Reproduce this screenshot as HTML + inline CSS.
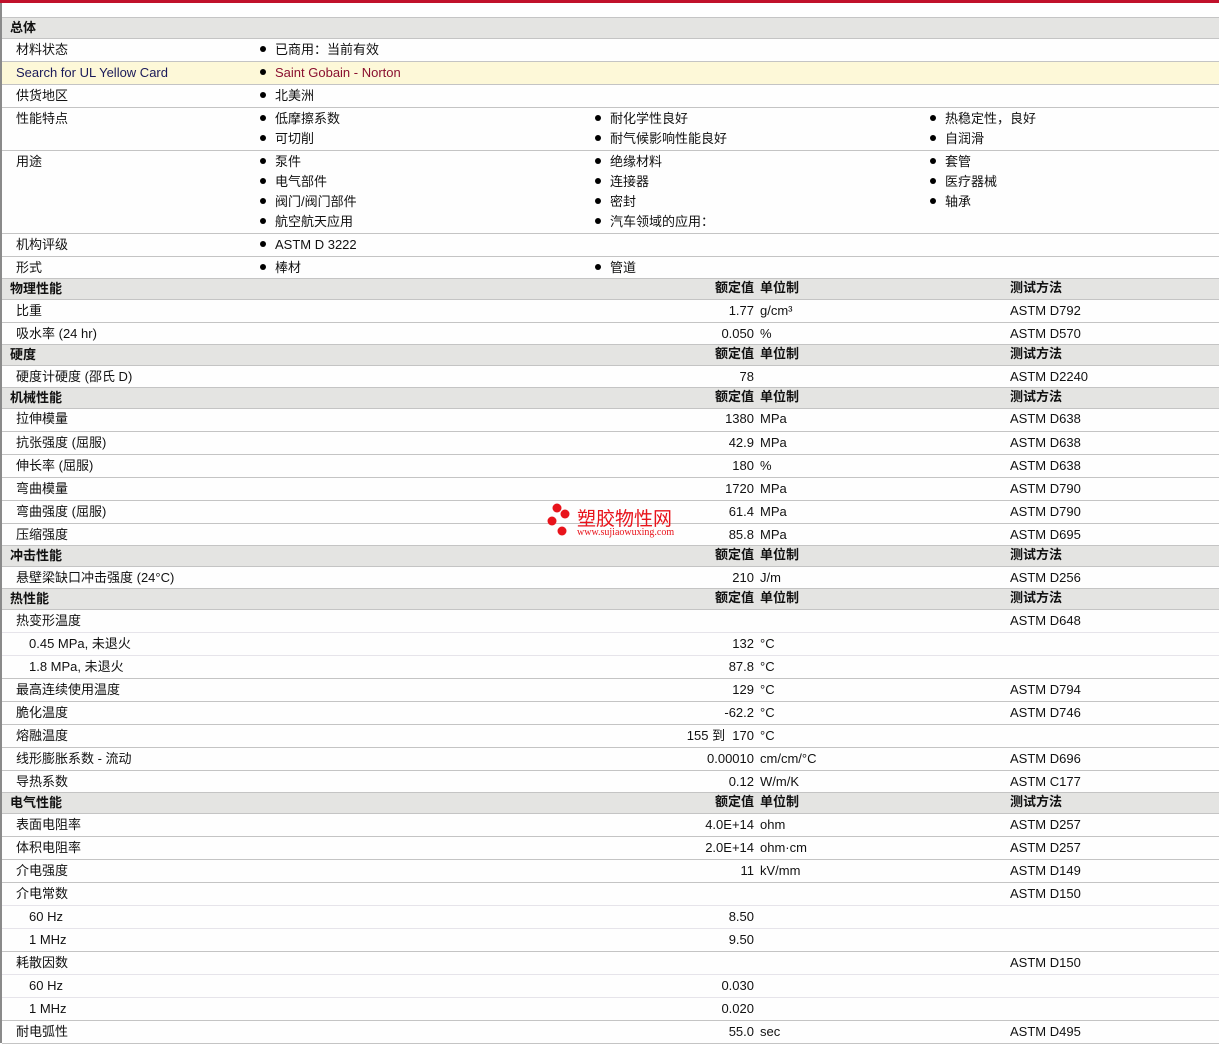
<!DOCTYPE html>
<html><head><meta charset="utf-8"><style>
body{margin:0;width:1219px;height:1043px;position:relative;overflow:hidden;background:#fefefe;font-family:"Liberation Sans","Noto Sans CJK SC",sans-serif;font-size:13px;color:#111}
.bar{position:absolute;left:0;top:0;width:1219px;height:3px;background:#c0102a}
.lb{position:absolute;left:0;top:3px;width:2px;height:1040px;background:#8a8a8a}
.r{position:absolute;left:2px;right:0;border-top:1px solid #c4c4c4}
.s{border-top-color:#e6e4ea}
.h{background:#e4e4e2}
.t{position:absolute;line-height:16px;white-space:nowrap;margin-top:1px}
.bo{font-weight:bold}
.v{position:absolute;right:465px;line-height:16px;white-space:nowrap;text-align:right;margin-top:1px}
.b{position:absolute;width:6px;height:6px;border-radius:50%;background:#000}
</style></head><body>
<div class="bar"></div>
<div class="r h" style="top:17px;height:21px"></div>
<div class="r" style="top:38px;height:22px"></div>
<div class="r" style="top:61px;height:22px;background:#fdf8d8"></div>
<div class="r" style="top:84px;height:22px"></div>
<div class="r" style="top:107px;height:42px"></div>
<div class="r" style="top:150px;height:82px"></div>
<div class="r" style="top:233px;height:22px"></div>
<div class="r" style="top:256px;height:21px"></div>
<div class="r h" style="top:278px;height:20px"></div>
<div class="r" style="top:299px;height:22px"></div>
<div class="r" style="top:322px;height:21px"></div>
<div class="r h" style="top:344px;height:20px"></div>
<div class="r" style="top:365px;height:21px"></div>
<div class="r h" style="top:387px;height:20px"></div>
<div class="r" style="top:408px;height:22px"></div>
<div class="r" style="top:431px;height:22px"></div>
<div class="r" style="top:454px;height:22px"></div>
<div class="r" style="top:477px;height:22px"></div>
<div class="r" style="top:500px;height:22px"></div>
<div class="r" style="top:523px;height:21px"></div>
<div class="r h" style="top:545px;height:20px"></div>
<div class="r" style="top:566px;height:21px"></div>
<div class="r h" style="top:588px;height:20px"></div>
<div class="r" style="top:609px;height:22px"></div>
<div class="r s" style="top:632px;height:22px"></div>
<div class="r s" style="top:655px;height:22px"></div>
<div class="r" style="top:678px;height:22px"></div>
<div class="r" style="top:701px;height:22px"></div>
<div class="r" style="top:724px;height:22px"></div>
<div class="r" style="top:747px;height:22px"></div>
<div class="r" style="top:770px;height:21px"></div>
<div class="r h" style="top:792px;height:20px"></div>
<div class="r" style="top:813px;height:22px"></div>
<div class="r" style="top:836px;height:22px"></div>
<div class="r" style="top:859px;height:22px"></div>
<div class="r" style="top:882px;height:22px"></div>
<div class="r s" style="top:905px;height:22px"></div>
<div class="r s" style="top:928px;height:22px"></div>
<div class="r" style="top:951px;height:22px"></div>
<div class="r s" style="top:974px;height:22px"></div>
<div class="r s" style="top:997px;height:22px"></div>
<div class="r" style="top:1020px;height:22px;border-bottom:1px solid #c4c4c4"></div>
<div class="lb"></div>

<span class="t bo" style="left:10px;top:19px">总体</span>
<span class="t" style="left:16px;top:41px">材料状态</span>
<span class="b" style="left:260px;top:46px"></span><span class="t" style="left:275px;top:41px">已商用：当前有效</span>
<span class="t" style="left:16px;top:64px;color:#1a1a5a">Search for UL Yellow Card</span>
<span class="b" style="left:260px;top:69px"></span><span class="t" style="left:275px;top:64px;color:#8a1030">Saint Gobain - Norton</span>
<span class="t" style="left:16px;top:87px">供货地区</span>
<span class="b" style="left:260px;top:92px"></span><span class="t" style="left:275px;top:87px">北美洲</span>
<span class="t" style="left:16px;top:110px">性能特点</span>
<span class="b" style="left:260px;top:115px"></span><span class="t" style="left:275px;top:110px">低摩擦系数</span>
<span class="b" style="left:260px;top:135px"></span><span class="t" style="left:275px;top:130px">可切削</span>
<span class="b" style="left:595px;top:115px"></span><span class="t" style="left:610px;top:110px">耐化学性良好</span>
<span class="b" style="left:595px;top:135px"></span><span class="t" style="left:610px;top:130px">耐气候影响性能良好</span>
<span class="b" style="left:930px;top:115px"></span><span class="t" style="left:945px;top:110px">热稳定性，良好</span>
<span class="b" style="left:930px;top:135px"></span><span class="t" style="left:945px;top:130px">自润滑</span>
<span class="t" style="left:16px;top:153px">用途</span>
<span class="b" style="left:260px;top:158px"></span><span class="t" style="left:275px;top:153px">泵件</span>
<span class="b" style="left:260px;top:178px"></span><span class="t" style="left:275px;top:173px">电气部件</span>
<span class="b" style="left:260px;top:198px"></span><span class="t" style="left:275px;top:193px">阀门/阀门部件</span>
<span class="b" style="left:260px;top:218px"></span><span class="t" style="left:275px;top:213px">航空航天应用</span>
<span class="b" style="left:595px;top:158px"></span><span class="t" style="left:610px;top:153px">绝缘材料</span>
<span class="b" style="left:595px;top:178px"></span><span class="t" style="left:610px;top:173px">连接器</span>
<span class="b" style="left:595px;top:198px"></span><span class="t" style="left:610px;top:193px">密封</span>
<span class="b" style="left:595px;top:218px"></span><span class="t" style="left:610px;top:213px">汽车领域的应用：</span>
<span class="b" style="left:930px;top:158px"></span><span class="t" style="left:945px;top:153px">套管</span>
<span class="b" style="left:930px;top:178px"></span><span class="t" style="left:945px;top:173px">医疗器械</span>
<span class="b" style="left:930px;top:198px"></span><span class="t" style="left:945px;top:193px">轴承</span>
<span class="t" style="left:16px;top:236px">机构评级</span>
<span class="b" style="left:260px;top:241px"></span><span class="t" style="left:275px;top:236px">ASTM D 3222</span>
<span class="t" style="left:16px;top:259px">形式</span>
<span class="b" style="left:260px;top:264px"></span><span class="t" style="left:275px;top:259px">棒材</span>
<span class="b" style="left:595px;top:264px"></span><span class="t" style="left:610px;top:259px">管道</span>

<span class="t bo" style="left:10px;top:280px">物理性能</span><span class="v bo" style="top:279px">额定值</span><span class="t bo" style="left:760px;top:279px">单位制</span><span class="t bo" style="left:1010px;top:279px">测试方法</span>
<span class="t" style="left:16px;top:302px">比重</span><span class="v" style="top:302px">1.77</span><span class="t" style="left:760px;top:302px">g/cm³</span><span class="t" style="left:1010px;top:302px">ASTM D792</span>
<span class="t" style="left:16px;top:325px">吸水率 (24 hr)</span><span class="v" style="top:325px">0.050</span><span class="t" style="left:760px;top:325px">%</span><span class="t" style="left:1010px;top:325px">ASTM D570</span>

<span class="t bo" style="left:10px;top:346px">硬度</span><span class="v bo" style="top:345px">额定值</span><span class="t bo" style="left:760px;top:345px">单位制</span><span class="t bo" style="left:1010px;top:345px">测试方法</span>
<span class="t" style="left:16px;top:368px">硬度计硬度 (邵氏 D)</span><span class="v" style="top:368px">78</span><span class="t" style="left:1010px;top:368px">ASTM D2240</span>

<span class="t bo" style="left:10px;top:389px">机械性能</span><span class="v bo" style="top:388px">额定值</span><span class="t bo" style="left:760px;top:388px">单位制</span><span class="t bo" style="left:1010px;top:388px">测试方法</span>
<span class="t" style="left:16px;top:410px">拉伸模量</span><span class="v" style="top:410px">1380</span><span class="t" style="left:760px;top:410px">MPa</span><span class="t" style="left:1010px;top:410px">ASTM D638</span>
<span class="t" style="left:16px;top:434px">抗张强度 (屈服)</span><span class="v" style="top:434px">42.9</span><span class="t" style="left:760px;top:434px">MPa</span><span class="t" style="left:1010px;top:434px">ASTM D638</span>
<span class="t" style="left:16px;top:457px">伸长率 (屈服)</span><span class="v" style="top:457px">180</span><span class="t" style="left:760px;top:457px">%</span><span class="t" style="left:1010px;top:457px">ASTM D638</span>
<span class="t" style="left:16px;top:480px">弯曲模量</span><span class="v" style="top:480px">1720</span><span class="t" style="left:760px;top:480px">MPa</span><span class="t" style="left:1010px;top:480px">ASTM D790</span>
<span class="t" style="left:16px;top:503px">弯曲强度 (屈服)</span><span class="v" style="top:503px">61.4</span><span class="t" style="left:760px;top:503px">MPa</span><span class="t" style="left:1010px;top:503px">ASTM D790</span>
<span class="t" style="left:16px;top:526px">压缩强度</span><span class="v" style="top:526px">85.8</span><span class="t" style="left:760px;top:526px">MPa</span><span class="t" style="left:1010px;top:526px">ASTM D695</span>

<span class="t bo" style="left:10px;top:547px">冲击性能</span><span class="v bo" style="top:546px">额定值</span><span class="t bo" style="left:760px;top:546px">单位制</span><span class="t bo" style="left:1010px;top:546px">测试方法</span>
<span class="t" style="left:16px;top:569px">悬壁梁缺口冲击强度 (24°C)</span><span class="v" style="top:569px">210</span><span class="t" style="left:760px;top:569px">J/m</span><span class="t" style="left:1010px;top:569px">ASTM D256</span>

<span class="t bo" style="left:10px;top:590px">热性能</span><span class="v bo" style="top:589px">额定值</span><span class="t bo" style="left:760px;top:589px">单位制</span><span class="t bo" style="left:1010px;top:589px">测试方法</span>
<span class="t" style="left:16px;top:612px">热变形温度</span><span class="t" style="left:1010px;top:612px">ASTM D648</span>
<span class="t" style="left:29px;top:635px">0.45 MPa, 未退火</span><span class="v" style="top:635px">132</span><span class="t" style="left:760px;top:635px">°C</span>
<span class="t" style="left:29px;top:658px">1.8 MPa, 未退火</span><span class="v" style="top:658px">87.8</span><span class="t" style="left:760px;top:658px">°C</span>
<span class="t" style="left:16px;top:681px">最高连续使用温度</span><span class="v" style="top:681px">129</span><span class="t" style="left:760px;top:681px">°C</span><span class="t" style="left:1010px;top:681px">ASTM D794</span>
<span class="t" style="left:16px;top:704px">脆化温度</span><span class="v" style="top:704px">-62.2</span><span class="t" style="left:760px;top:704px">°C</span><span class="t" style="left:1010px;top:704px">ASTM D746</span>
<span class="t" style="left:16px;top:727px">熔融温度</span><span class="v" style="top:727px">155 到 &nbsp;170</span><span class="t" style="left:760px;top:727px">°C</span>
<span class="t" style="left:16px;top:750px">线形膨胀系数 - 流动</span><span class="v" style="top:750px">0.00010</span><span class="t" style="left:760px;top:750px">cm/cm/°C</span><span class="t" style="left:1010px;top:750px">ASTM D696</span>
<span class="t" style="left:16px;top:773px">导热系数</span><span class="v" style="top:773px">0.12</span><span class="t" style="left:760px;top:773px">W/m/K</span><span class="t" style="left:1010px;top:773px">ASTM C177</span>

<span class="t bo" style="left:10px;top:794px">电气性能</span><span class="v bo" style="top:793px">额定值</span><span class="t bo" style="left:760px;top:793px">单位制</span><span class="t bo" style="left:1010px;top:793px">测试方法</span>
<span class="t" style="left:16px;top:816px">表面电阻率</span><span class="v" style="top:816px">4.0E+14</span><span class="t" style="left:760px;top:816px">ohm</span><span class="t" style="left:1010px;top:816px">ASTM D257</span>
<span class="t" style="left:16px;top:839px">体积电阻率</span><span class="v" style="top:839px">2.0E+14</span><span class="t" style="left:760px;top:839px">ohm·cm</span><span class="t" style="left:1010px;top:839px">ASTM D257</span>
<span class="t" style="left:16px;top:862px">介电强度</span><span class="v" style="top:862px">11</span><span class="t" style="left:760px;top:862px">kV/mm</span><span class="t" style="left:1010px;top:862px">ASTM D149</span>
<span class="t" style="left:16px;top:885px">介电常数</span><span class="t" style="left:1010px;top:885px">ASTM D150</span>
<span class="t" style="left:29px;top:908px">60 Hz</span><span class="v" style="top:908px">8.50</span>
<span class="t" style="left:29px;top:931px">1 MHz</span><span class="v" style="top:931px">9.50</span>
<span class="t" style="left:16px;top:954px">耗散因数</span><span class="t" style="left:1010px;top:954px">ASTM D150</span>
<span class="t" style="left:29px;top:977px">60 Hz</span><span class="v" style="top:977px">0.030</span>
<span class="t" style="left:29px;top:1000px">1 MHz</span><span class="v" style="top:1000px">0.020</span>
<span class="t" style="left:16px;top:1023px">耐电弧性</span><span class="v" style="top:1023px">55.0</span><span class="t" style="left:760px;top:1023px">sec</span><span class="t" style="left:1010px;top:1023px">ASTM D495</span>

<svg style="position:absolute;left:544px;top:502px" width="32" height="36"><circle cx="13" cy="6" r="4.5" fill="#e8131b"/><circle cx="21" cy="12" r="4.5" fill="#e8131b"/><circle cx="8" cy="19" r="4.5" fill="#e8131b"/><circle cx="18" cy="29" r="4.5" fill="#e8131b"/></svg>
<span class="t" style="left:577px;top:507px;font-size:19px;line-height:22px;color:#e8131b;font-family:'Noto Sans CJK SC',sans-serif;margin-top:0">塑胶物性网</span>
<span class="t" style="left:577px;top:527px;font-size:10px;line-height:11px;color:#e8131b;font-family:'Liberation Serif',serif;margin-top:0">www.sujiaowuxing.com</span>
</body></html>
